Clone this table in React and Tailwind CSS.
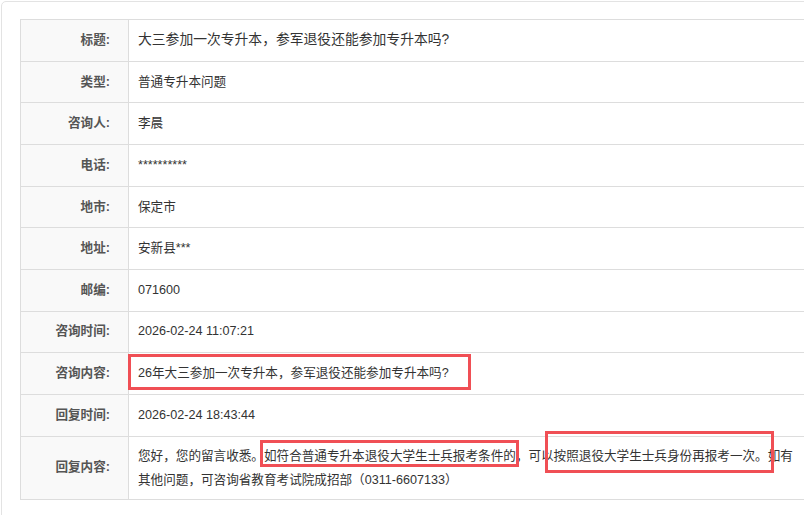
import React from 'react';

const rows = [
  { label: '标题:', value: '大三参加一次专升本，参军退役还能参加专升本吗?', size: 'text-[13.8px]' },
  { label: '类型:', value: '普通专升本问题' },
  { label: '咨询人:', value: '李晨' },
  { label: '电话:', value: '**********' },
  { label: '地市:', value: '保定市' },
  { label: '地址:', value: '安新县***' },
  { label: '邮编:', value: '071600' },
  { label: '咨询时间:', value: '2026-02-24 11:07:21' },
  { label: '咨询内容:', value: '26年大三参加一次专升本，参军退役还能参加专升本吗?' },
  { label: '回复时间:', value: '2026-02-24 18:43:44' },
];

export default function App() {
  return (
    <div
      className="relative w-[804px] h-[515px] overflow-hidden bg-white text-[12.6px] text-[#333]"
      style={{ fontFamily: '"Liberation Sans", "Noto Sans CJK SC", sans-serif' }}
    >
      <div className="ml-[1px] mt-[1px] w-[900px] h-[560px] border border-[#e3e3e3] rounded-[5px] pl-[18px] pt-[17px]">
        <div className="w-[800px] border-t border-l border-[#dddddd]">
          {rows.map((r) => (
            <div key={r.label} className="flex h-[41.67px] border-b border-[#dddddd]">
              <div className="w-[108px] shrink-0 flex items-center justify-end pr-[18px] bg-[#f9f9f9] border-r border-[#dddddd] font-bold text-[#555]">
                {r.label}
              </div>
              <div className={`flex-1 flex items-center pl-[9px] ${r.size || ''}`}>{r.value}</div>
            </div>
          ))}
          {/* reply row */}
          <div className="flex h-[63.33px] border-b border-[#dddddd]">
            <div className="w-[108px] shrink-0 flex items-center justify-end pr-[18px] bg-[#f9f9f9] border-r border-[#dddddd] font-bold text-[#555]">
              回复内容:
            </div>
            <div className="flex-1 flex items-center pl-[9px] leading-[24px] whitespace-nowrap">
              <p>
                您好，您的留言收悉。如符合普通专升本退役大学生士兵报考条件的，可以按照退役大学生士兵身份再报考一次。如有
                <br />
                其他问题，可咨询省教育考试院成招部（0311-6607133）
              </p>
            </div>
          </div>
        </div>
      </div>

      {/* annotation boxes */}
      <div className="absolute left-[128px] top-[354px] w-[343px] h-[36px] border-[3px] border-[#f04f55]" />
      <div className="absolute left-[260px] top-[440px] w-[259px] h-[27px] border-[3px] border-[#f04f55]" />
      <div className="absolute left-[545px] top-[431px] w-[229px] h-[42px] border-[3px] border-[#f04f55]" />
    </div>
  );
}
